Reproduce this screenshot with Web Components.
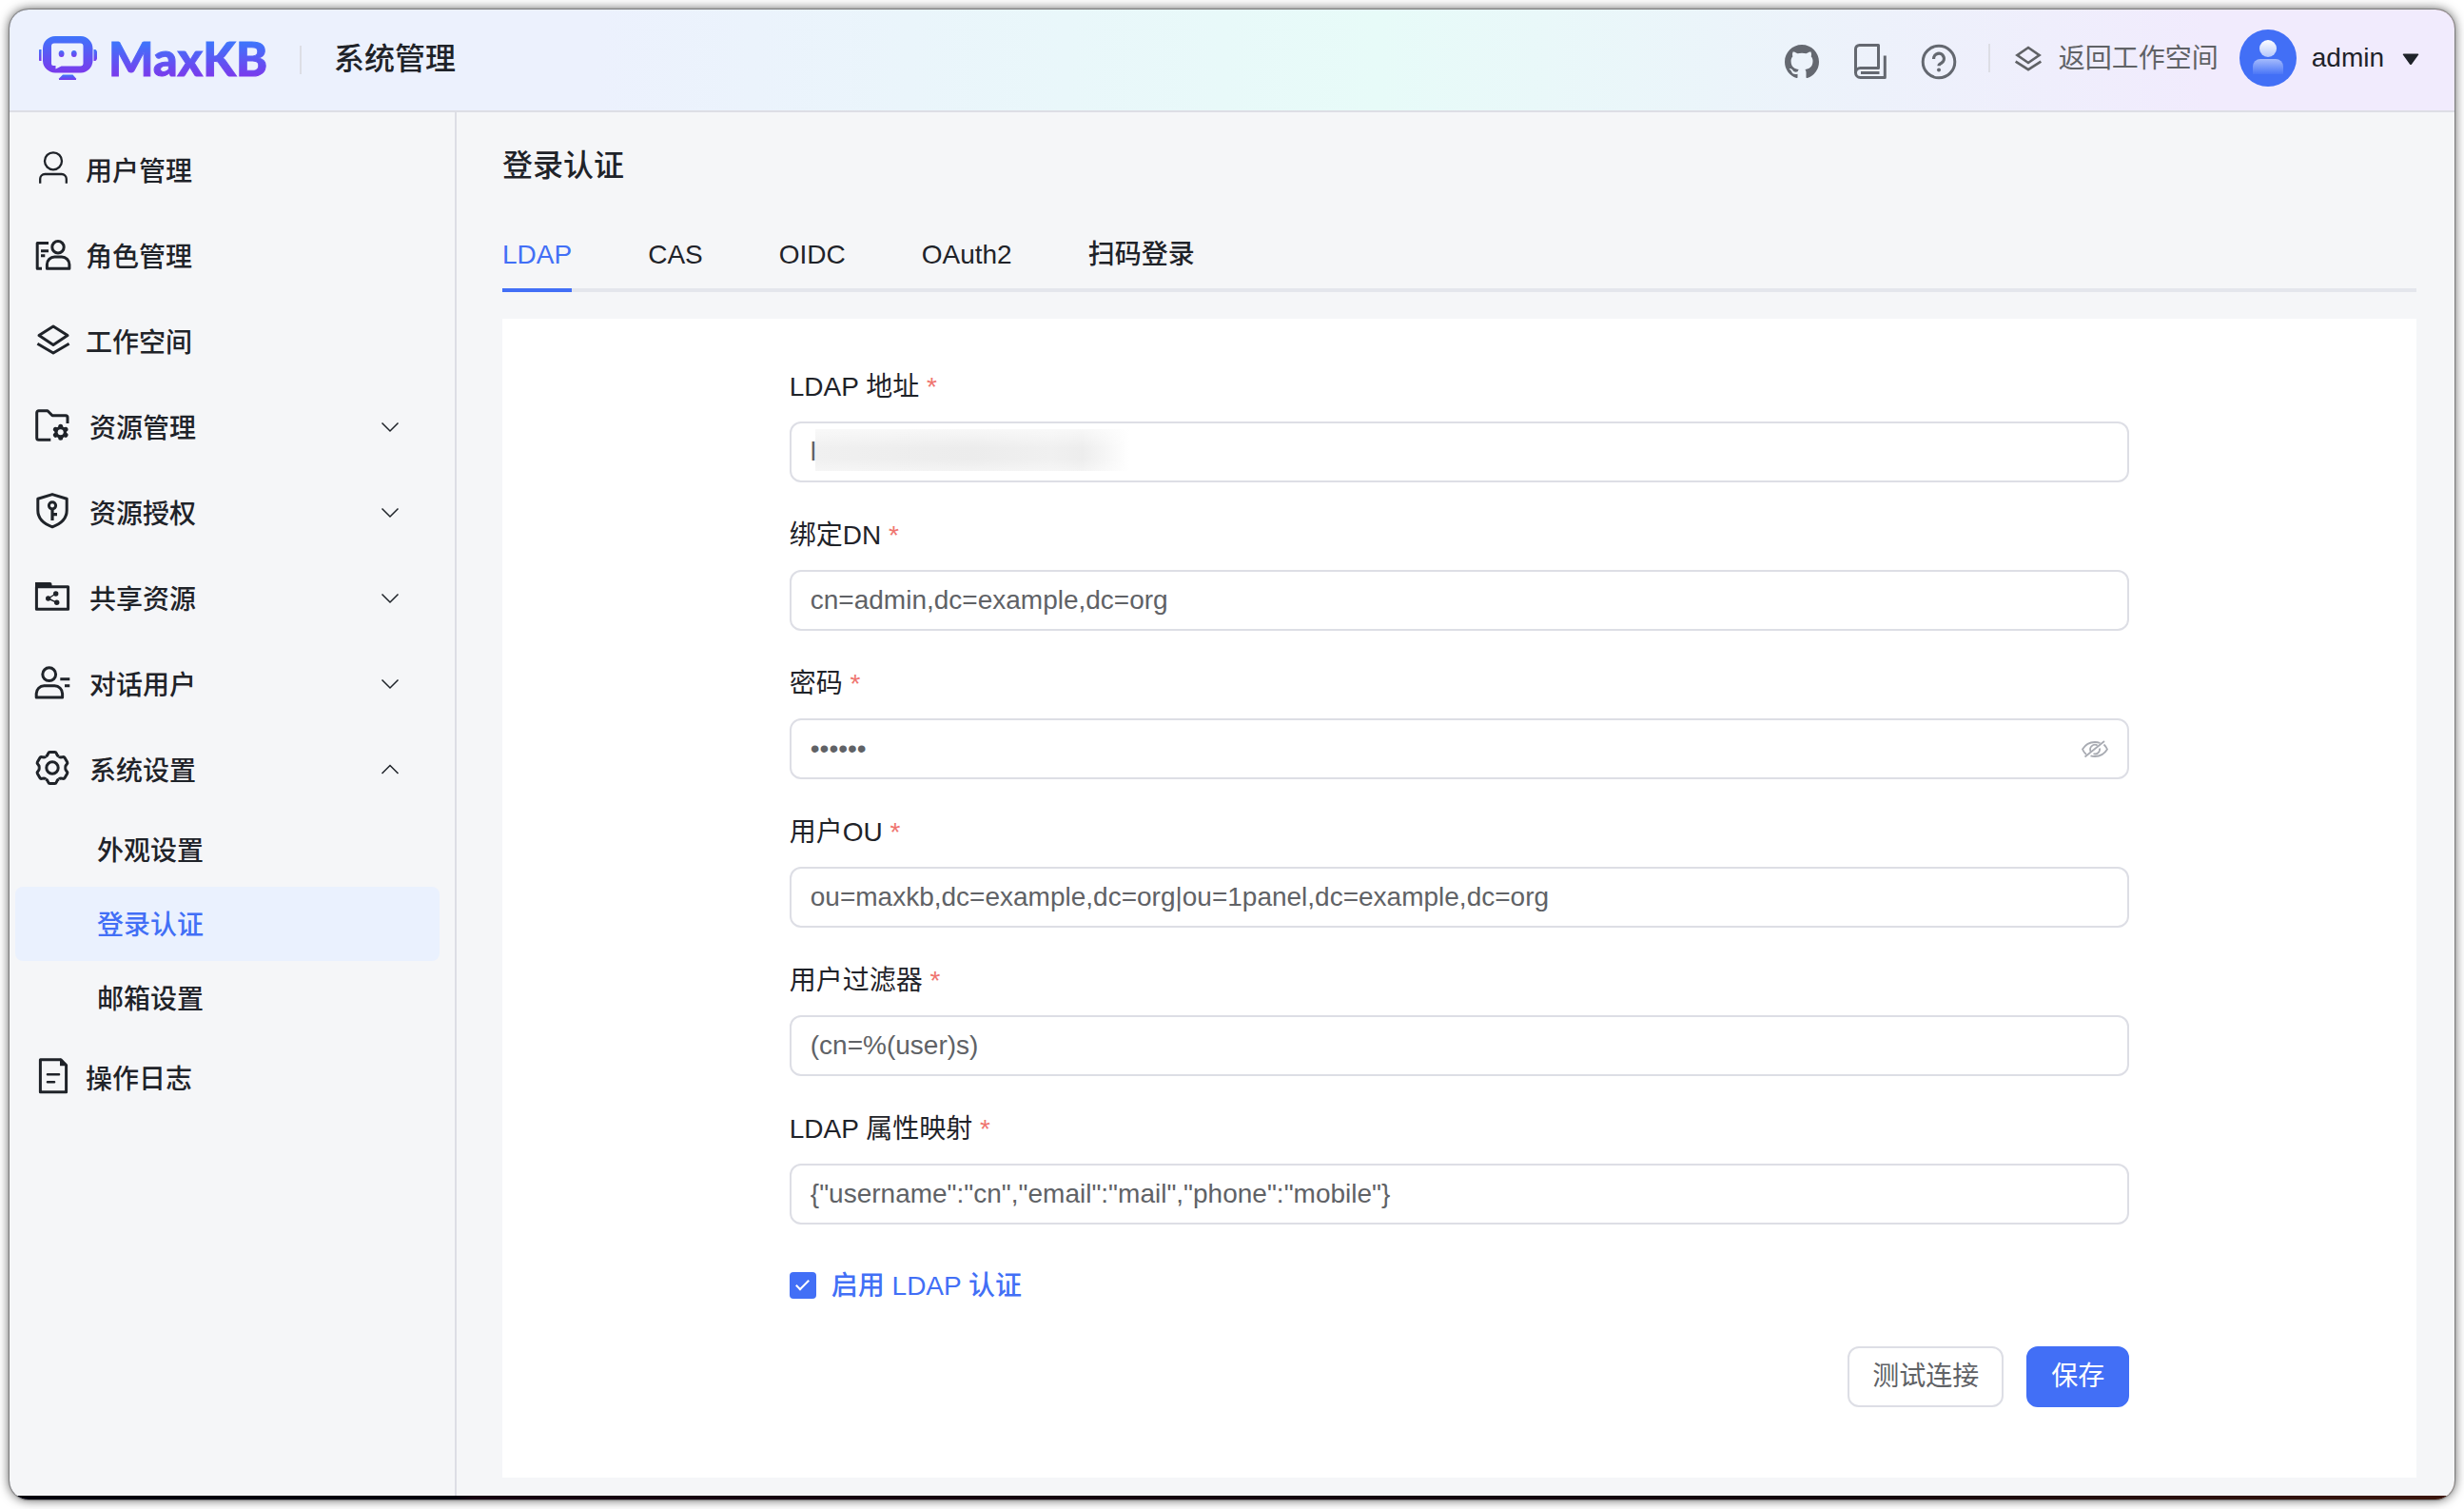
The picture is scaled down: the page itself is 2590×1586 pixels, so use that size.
<!DOCTYPE html>
<html lang="zh-CN">
<head>
<meta charset="UTF-8">
<title>MaxKB 系统管理</title>
<style>
    body {
        --primary: #426ff6;
        --text: #1f2329;
        --text-soft: #606266;
        --line: #dddee5;
        --page: #f5f6f8;
        margin: 0;
        color: var(--text);
        background: #fff;
        font: 28px/44px "Liberation Sans", "Noto Sans CJK SC", sans-serif;
    }
</style>
</head>
<body>
<app-window>
    <app-header slot="header"></app-header>
    <side-nav slot="aside">
        <nav-item icon="user">用户管理</nav-item>
        <nav-item icon="role">角色管理</nav-item>
        <nav-item icon="layers">工作空间</nav-item>
        <nav-item icon="folder" group>资源管理</nav-item>
        <nav-item icon="shield" group>资源授权</nav-item>
        <nav-item icon="share" group>共享资源</nav-item>
        <nav-item icon="chat" group>对话用户</nav-item>
        <nav-item icon="gear" group open>系统设置</nav-item>
        <nav-sub-item>外观设置</nav-sub-item>
        <nav-sub-item active>登录认证</nav-sub-item>
        <nav-sub-item>邮箱设置</nav-sub-item>
        <nav-item icon="log">操作日志</nav-item>
    </side-nav>
    <auth-page></auth-page>
</app-window>

<script>
const tooth = '<path d="M-6.9-12Q-5.2-12.6-4.8-14L-4.2-15.4Q-3.8-16.6-2.6-16.6H2.6Q3.8-16.6 4.2-15.4L4.8-14Q5.2-12.6 6.9-12"/>';

const ICONS = {
    user: `<g stroke-width="2.3"><circle cx="18" cy="8.3" r="9"/><path d="M4.2 31.7V27a5 5 0 0 1 5-5h17.6a5 5 0 0 1 5 5v4.7"/></g>`,
    role: `<path d="M13 4.5H1.2v26.8H6"/><path d="M5 12.7h8M5 17.7h4.3"/><circle cx="23" cy="8.7" r="6.2"/><path d="M11.4 31.3V27a8 8 0 0 1 8-8h7.5a8 8 0 0 1 8 8v4.3z"/>`,
    layers: `<path d="M18 2l15 9.6-15 9.8L3 11.6z"/><path d="M1.4 20.2L18 30l16.6-9.8"/>`,
    folder: `<path d="M15.3 31.3H2.7a2 2 0 0 1-2-2V2.7a2 2 0 0 1 2-2H12l5 5h14a2 2 0 0 1 2 2V14"/>
        <g transform="translate(25.7 23.3)"><path stroke-width="5" stroke-linecap="round" d="M0-6V6M-5.3-3L5.3 3M5.3-3L-5.3 3"/><circle r="4.6" stroke-width="3.4"/><circle r="3" fill="#f5f6f8" stroke="none"/></g>`,
    shield: `<path d="M17-1.4L32.2 3.2v12.3C32.2 24 26 29.5 17 32.8 8 29.5 1.8 24 1.8 15.5V3.2z"/><circle cx="17" cy="10.3" r="3.6"/><path stroke-width="3.2" d="M17 14v12M17 19.6h5"/>`,
    share: `<path d="M.4 5.8h33.2v23.5H.4z"/><path fill="currentColor" stroke="none" d="M-1 1h15.5q2 0 2 2v3H-1z"/><path stroke-width="1.4" d="M20.7 13l-8 5 9 4.3"/>
        <g fill="currentColor" stroke="none"><circle cx="12.7" cy="18" r="2.7"/><circle cx="20.7" cy="13" r="2.7"/><circle cx="21.7" cy="22.3" r="2.7"/></g>`,
    chat: `<circle cx="13.7" cy="7.7" r="6.9"/><path d="M.2 31.9V28a8.2 8.2 0 0 1 8.2-8.2h11A8.2 8.2 0 0 1 27.6 28v3.9z"/><path d="M25.3 12.7h10M30 19.7h5.3"/>`,
    gear: `<g transform="translate(17 16)"><circle r="6.2"/>${[0, 60, 120, 180, 240, 300].map(a => `<g transform="rotate(${a})">${tooth}</g>`).join('')}</g>`,
    log: `<path d="M4.4-1.3H26l5.6 5.9v28.2H4.4z"/><path fill="currentColor" stroke="none" d="M25-2.7l8 8h-8z"/><path stroke-width="2.6" stroke-linecap="round" d="M12 14.3h12M12 22.3h7"/>`
};

const icon = name => `<svg viewBox="0 2 36 36" width="36" height="36" aria-hidden="true" fill="none" stroke="currentColor" stroke-width="3" stroke-linejoin="round" overflow="visible">${ICONS[name]}</svg>`;

class AppWindow extends HTMLElement {
    constructor() {
        super();
        this.attachShadow({mode: 'open'});
        this.shadowRoot.innerHTML = `
            <style>
                :host {
                    display: flex;
                    box-sizing: border-box;
                    min-height: 100vh;
                    padding: 10px;
                }

                .frame {
                    flex: 1;
                    display: flex;
                    flex-direction: column;
                    padding-bottom: 4px;
                    border-radius: 20px;
                    overflow: hidden;
                    background: linear-gradient(90deg, #00000c 0 18%, #160010 19%, #12060c 75%, #3c160c);
                    box-shadow: 0 0 1px 1px rgba(0, 0, 0, .3), 0 0 12px rgba(0, 0, 0, .7);
                }

                .body {
                    flex: 1;
                    display: flex;
                    background: var(--page);
                }

                ::slotted(auth-page) {
                    flex: 1;
                }
            </style>
            <div class="frame">
                <slot name="header"></slot>
                <div class="body">
                    <slot name="aside"></slot>
                    <slot></slot>
                </div>
            </div>`;
    }
}
customElements.define('app-window', AppWindow);

class AppHeader extends HTMLElement {
    constructor() {
        super();
        this.attachShadow({mode: 'open'});
        this.shadowRoot.innerHTML = `
            <style>
                :host {
                    display: block;
                    background: linear-gradient(90deg, #ecf1fd 24%, #e7fbf8 56%, #f1ebfd 90%);
                    border-bottom: 2px solid var(--line);
                }

                header {
                    display: flex;
                    align-items: center;
                    height: 102px;
                    padding: 0 36px 4px 30px;
                }

                a, button {
                    display: flex;
                    align-items: center;
                    padding: 0;
                    border: 0;
                    background: none;
                    color: #646870;
                    font: inherit;
                    text-decoration: none;
                }

                .logo {
                    gap: 10px;
                }

                .brand {
                    font: 900 50px/60px Lato, sans-serif;
                    background: linear-gradient(#3f74fb 24%, #7a3aec 82%);
                    -webkit-background-clip: text;
                    background-clip: text;
                    -webkit-text-stroke: 1px transparent;
                    color: transparent;
                }

                .rule {
                    width: 2px;
                    height: 30px;
                    background: var(--line);
                }

                .logo + .rule {
                    margin: 4px 34px 0;
                }

                h1 {
                    margin: 0;
                    padding-top: 2px;
                    font-size: 32px;
                    font-weight: 500;
                }

                .tools {
                    display: flex;
                    align-items: center;
                    gap: 36px;
                    margin: 8px 34px 0 auto;
                }

                .back {
                    gap: 16px;
                    padding-top: 2px;
                    margin: 0 22px 0 24px;
                    color: var(--text-soft);
                }

                .account {
                    gap: 16px;
                    color: var(--text);
                    font-weight: 500;
                }

                .account svg:last-child {
                    margin-left: 2px;
                }
            </style>
            <header>
                <a class="logo" href="#">
                    <svg width="64" height="48" viewBox="0 0 64 48" aria-hidden="true">
                        <defs>
                            <linearGradient id="g" x1="0" y1="0" x2="0" y2="1"><stop stop-color="#3f74fb"/><stop offset="1" stop-color="#7a3aec"/></linearGradient>
                        </defs>
                        <g fill="url(#g)">
                            <path d="M3.5 15H1.7Q1 15 1 15.8v10.4q0 .8.8.8h1.7zM58.500 15h1.800q1.400.7 1.700 2.500v7q-.3 1.800-1.700 2.500h-1.800z"/>
                            <path fill-rule="evenodd" d="M18 1h27A13 13 0 0 1 57.500 14v13A13 13 0 0 1 45 39.500H18A13 13 0 0 1 5 27V14A13 13 0 0 1 18 1zM17 8.500a3 3 0 0 0-3 3v18.500q0 2 2 2h2.500v3.500l6-3H44.500a3 3 0 0 0 3-3V11.500a3 3 0 0 0-3-3z"/>
                            <ellipse cx="24.600" cy="19.500" rx="2.900" ry="3.600"/>
                            <ellipse cx="37.800" cy="19.500" rx="2.900" ry="3.600"/>
                            <path d="M26 41.500h10.500l3.500 4v1.500H22v-1.500z"/>
                        </g>
                    </svg>
                    <span class="brand">MaxKB</span>
                </a>
                <span class="rule"></span>
                <h1>系统管理</h1>
                <div class="tools">
                    <a href="#" aria-label="GitHub"><svg width="36" height="36" viewBox="0 0 16 16" fill="currentColor"><path d="M8 0C3.580 0 0 3.580 0 8c0 3.540 2.290 6.530 5.470 7.590.4.070.55-.17.55-.38 0-.19-.01-.82-.01-1.490-2.010.37-2.530-.49-2.690-.94-.09-.23-.48-.94-.82-1.130-.28-.15-.68-.52-.01-.53.63-.01 1.080.58 1.230.82.72 1.210 1.870.87 2.330.66.070-.52.28-.87.510-1.070-1.780-.2-3.640-.89-3.640-3.950 0-.87.310-1.590.82-2.150-.08-.2-.36-1.020.08-2.120 0 0 .67-.21 2.200.82.64-.18 1.320-.27 2-.27s1.360.09 2 .27c1.530-1.040 2.200-.82 2.200-.82.44 1.100.16 1.920.08 2.120.51.56.82 1.270.82 2.150 0 3.070-1.870 3.750-3.650 3.950.29.25.54.73.54 1.480 0 1.070-.01 1.930-.01 2.200 0 .21.15.46.55.38A8.010 8.010 0 0 0 16 8c0-4.420-3.580-8-8-8z"/></svg></a>
                    <a href="#" aria-label="文档"><svg width="36" height="36" viewBox="0 0 36 36" fill="none" stroke="currentColor" stroke-width="3" stroke-linejoin="round" overflow="visible"><path d="M2.500 30V4.500a4 4 0 0 1 4-4h20v24H7.500a5 5 0 0 0 0 10h25.800V11.500"/><path d="M8 29.500h19.500"/></svg></a>
                    <a href="#" aria-label="帮助"><svg width="36" height="36" viewBox="0 0 36 36" fill="none" stroke="currentColor" stroke-width="3" overflow="visible"><circle cx="18" cy="18" r="16.800"/><path stroke-width="3.200" d="M12.600 15a5.400 5.400 0 1 1 8.200 4.200q-2.800 1.200-2.800 3"/><circle cx="18" cy="26.500" r="2" fill="currentColor" stroke="none"/></svg></a>
                </div>
                <span class="rule"></span>
                <a class="back" href="#">
                    <svg width="32" height="32" viewBox="0 1 36 36" fill="none" stroke="currentColor" stroke-width="3" overflow="visible"><path d="M18 5.500l13 9-13 9-13-9z"/><path d="M3 22l15 9.500L33 22"/></svg>
                    返回工作空间
                </a>
                <button class="account" type="button">
                    <svg width="60" height="60" viewBox="0 0 60 60" aria-hidden="true">
                        <defs>
                            <linearGradient id="h" x1="0" y1="0" x2="0" y2="1"><stop stop-color="#fff"/><stop offset="1" stop-color="#b4c7fd"/></linearGradient>
                            <linearGradient id="b" x1="0" y1="0" x2="0" y2="1"><stop stop-color="#a5bbfc"/><stop offset="1" stop-color="#4a76f7"/></linearGradient>
                        </defs>
                        <circle cx="30" cy="30" r="30" fill="#426ff6"/>
                        <circle cx="30" cy="20" r="9" fill="url(#h)"/>
                        <path d="M22 31h16a8 8 0 0 1 8 8v8H14v-8a8 8 0 0 1 8-8z" fill="url(#b)"/>
                    </svg>
                    admin
                    <svg width="20" height="20" viewBox="0 0 20 20" aria-hidden="true"><path d="M2.500 5.500h15q1.500 0 .5 1.300l-7 9.700q-1 1.200-2 0L2 6.800q-1-1.300.5-1.300z" fill="#1f2329"/></svg>
                </button>
            </header>`;
    }
}
customElements.define('app-header', AppHeader);

class SideNav extends HTMLElement {
    constructor() {
        super();
        this.attachShadow({mode: 'open'});
        this.shadowRoot.innerHTML = `
            <style>
                :host {
                    display: block;
                    box-sizing: border-box;
                    width: 470px;
                    padding: 16px 16px 16px 6px;
                    border-right: 2px solid var(--line);
                }
            </style>
            <nav><slot></slot></nav>`;
    }
}
customElements.define('side-nav', SideNav);

class NavItem extends HTMLElement {
    constructor() {
        super();
        this.attachShadow({mode: 'open'});
    }

    connectedCallback() {
        const group = this.hasAttribute('group');
        const open = this.hasAttribute('open');
        const tag = group ? `button type="button" aria-expanded="${open}"` : 'a href="#"';
        this.shadowRoot.innerHTML = `
            <style>
                :host {
                    display: block;
                }

                a, button {
                    display: flex;
                    align-items: center;
                    gap: 16px;
                    box-sizing: border-box;
                    width: 100%;
                    height: 90px;
                    padding: 4px 42px 0 22px;
                    border: 0;
                    background: none;
                    color: inherit;
                    font: inherit;
                    font-weight: 500;
                    text-decoration: none;
                }

                button {
                    gap: 20px;
                }

                .arrow {
                    margin-left: auto;
                }
            </style>
            <${tag}>
                ${icon(this.getAttribute('icon'))}
                <slot></slot>
                ${group ? `<svg class="arrow" width="20" height="20" viewBox="0 2 20 20" fill="none" stroke="currentColor" stroke-width="1.5"><path d="${open ? 'M1.500 14L10 5.500l8.500 8.500' : 'M1.500 5.500L10 14l8.500-8.500'}"/></svg>` : ''}
            </${group ? 'button' : 'a'}>`;
    }
}
customElements.define('nav-item', NavItem);

class NavSubItem extends HTMLElement {
    constructor() {
        super();
        this.attachShadow({mode: 'open'});
        this.shadowRoot.innerHTML = `
            <style>
                :host {
                    display: block;
                    border-radius: 8px;
                }

                :host([active]) {
                    background: #eaf1fe;
                    color: var(--primary);
                }

                a {
                    display: block;
                    padding: 19px 0 15px 86px;
                    color: inherit;
                    font-weight: 500;
                    text-decoration: none;
                }
            </style>
            <a href="#"><slot></slot></a>`;
    }
}
customElements.define('nav-sub-item', NavSubItem);

class AuthTabs extends HTMLElement {
    constructor() {
        super();
        this.attachShadow({mode: 'open'});
        this.shadowRoot.innerHTML = `
            <style>
                :host {
                    display: block;
                }

                .tabs {
                    display: flex;
                    gap: 80px;
                    box-shadow: inset 0 -4px #e4e6ec;
                }

                button {
                    height: 80px;
                    padding: 2px 0 0;
                    border: 0;
                    background: none;
                    color: inherit;
                    font: inherit;
                    font-weight: 500;
                }

                button[aria-selected="true"] {
                    color: var(--primary);
                    box-shadow: inset 0 -4px var(--primary);
                }
            </style>
            <div class="tabs" role="tablist">
                <button type="button" role="tab" aria-selected="true">LDAP</button>
                <button type="button" role="tab" aria-selected="false">CAS</button>
                <button type="button" role="tab" aria-selected="false">OIDC</button>
                <button type="button" role="tab" aria-selected="false">OAuth2</button>
                <button type="button" role="tab" aria-selected="false">扫码登录</button>
            </div>`;
    }
}
customElements.define('auth-tabs', AuthTabs);

class FormField extends HTMLElement {
    constructor() {
        super();
        this.attachShadow({mode: 'open'});
    }

    connectedCallback() {
        const password = this.getAttribute('type') === 'password';
        this.shadowRoot.innerHTML = `
            <style>
                :host {
                    display: block;
                }

                label {
                    display: block;
                    padding-top: 2px;
                    margin-bottom: 14px;
                }

                label span {
                    color: #ef7570;
                }

                .box {
                    display: flex;
                    align-items: center;
                    position: relative;
                    box-sizing: border-box;
                    height: 64px;
                    padding: 0 20px;
                    border: 2px solid var(--line);
                    border-radius: 12px;
                    background: #fff;
                }

                input {
                    flex: 1;
                    min-width: 0;
                    padding: 0;
                    border: 0;
                    outline: 0;
                    background: none;
                    color: var(--text-soft);
                    font: inherit;
                }

                button {
                    display: flex;
                    padding: 0;
                    border: 0;
                    background: none;
                    color: #a8abb2;
                }

                /* keeps the server address unreadable */
                .mask {
                    position: absolute;
                    left: 25px;
                    top: 6px;
                    width: 330px;
                    height: 44px;
                    background: linear-gradient(90deg, #f0f0f0, #ececec 50%, #f0f0f0 75%, #ededed 85%, #fff);
                }

                .mask::after {
                    content: "";
                    position: absolute;
                    inset: 0;
                    background: linear-gradient(rgba(255, 255, 255, .6), transparent 45%, transparent 70%, rgba(255, 255, 255, .4));
                }
            </style>
            <label for="field">${this.getAttribute('label')} <span>*</span></label>
            <div class="box">
                <input id="field" type="${password ? 'password' : 'text'}" required>
                ${this.hasAttribute('masked') ? '<div class="mask"></div>' : ''}
                ${password ? `<button type="button" aria-label="显示密码"><svg width="28" height="28" viewBox="0 0 28 28" fill="none" stroke="currentColor" stroke-width="1.8"><path d="M5 20Q2.500 18 1 14.500 5.500 7 14 7q3 0 5.500 1M23.500 9.500Q26 12 27 14.500 22.500 22 14 22q-2.500 0-4.500-.7"/><path d="M9.700 17a5 5 0 0 1 7-6.600M19 13.500a5 5 0 0 1-6.500 5.700"/><path d="M24 6L3.500 22.500"/></svg></button>` : ''}
            </div>`;
        this.shadowRoot.getElementById('field').value = this.getAttribute('value');
    }
}
customElements.define('form-field', FormField);

class CheckField extends HTMLElement {
    constructor() {
        super();
        this.attachShadow({mode: 'open'});
        this.shadowRoot.innerHTML = `
            <style>
                :host {
                    display: flex;
                    align-items: center;
                    height: 64px;
                }

                label {
                    display: flex;
                    align-items: center;
                    gap: 16px;
                    color: var(--primary);
                    font-weight: 500;
                }

                span {
                    padding-top: 2px;
                }

                input {
                    appearance: none;
                    display: grid;
                    place-items: center;
                    width: 28px;
                    height: 28px;
                    margin: 0;
                    border-radius: 4px;
                    background: var(--primary);
                }

                input:checked::after {
                    content: "";
                    width: 5px;
                    height: 12px;
                    margin-bottom: 4px;
                    border: solid #fff;
                    border-width: 0 2px 2px 0;
                    transform: rotate(45deg);
                }
            </style>
            <label><input type="checkbox" checked><span><slot></slot></span></label>`;
    }
}
customElements.define('check-field', CheckField);

class AppButton extends HTMLElement {
    constructor() {
        super();
        this.attachShadow({mode: 'open'});
        this.shadowRoot.innerHTML = `
            <style>
                :host {
                    display: block;
                }

                button {
                    height: 64px;
                    padding: 0 24px;
                    border: 2px solid var(--line);
                    border-radius: 12px;
                    background: #fff;
                    color: var(--text-soft);
                    font: inherit;
                }

                :host([primary]) button {
                    border-color: var(--primary);
                    background: var(--primary);
                    color: #fff;
                }
            </style>
            <button type="button"><slot></slot></button>`;
    }
}
customElements.define('app-button', AppButton);

class AuthPage extends HTMLElement {
    constructor() {
        super();
        this.attachShadow({mode: 'open'});
        this.shadowRoot.innerHTML = `
            <style>
                :host {
                    display: flex;
                    flex-direction: column;
                    padding: 32px 40px 19px 48px;
                }

                h2 {
                    margin: 0 0 29px;
                    font-size: 32px;
                    line-height: 48px;
                    font-weight: 500;
                }

                .card {
                    flex: 1;
                    margin-top: 28px;
                    padding: 48px 0;
                    background: #fff;
                }

                form {
                    display: flex;
                    flex-direction: column;
                    gap: 32px;
                    width: 70%;
                    margin: 0 auto;
                }

                .actions {
                    display: flex;
                    justify-content: flex-end;
                    gap: 24px;
                }
            </style>
            <h2>登录认证</h2>
            <auth-tabs></auth-tabs>
            <div class="card">
                <form>
                    <form-field label="LDAP 地址" value="l" masked></form-field>
                    <form-field label="绑定DN" value="cn=admin,dc=example,dc=org"></form-field>
                    <form-field label="密码" value="maxkb1" type="password"></form-field>
                    <form-field label="用户OU" value="ou=maxkb,dc=example,dc=org|ou=1panel,dc=example,dc=org"></form-field>
                    <form-field label="用户过滤器" value="(cn=%(user)s)"></form-field>
                    <form-field label="LDAP 属性映射" value='{"username":"cn","email":"mail","phone":"mobile"}'></form-field>
                    <check-field>启用 LDAP 认证</check-field>
                    <div class="actions">
                        <app-button>测试连接</app-button>
                        <app-button primary>保存</app-button>
                    </div>
                </form>
            </div>`;
    }
}
customElements.define('auth-page', AuthPage);
</script>
</body>
</html>
